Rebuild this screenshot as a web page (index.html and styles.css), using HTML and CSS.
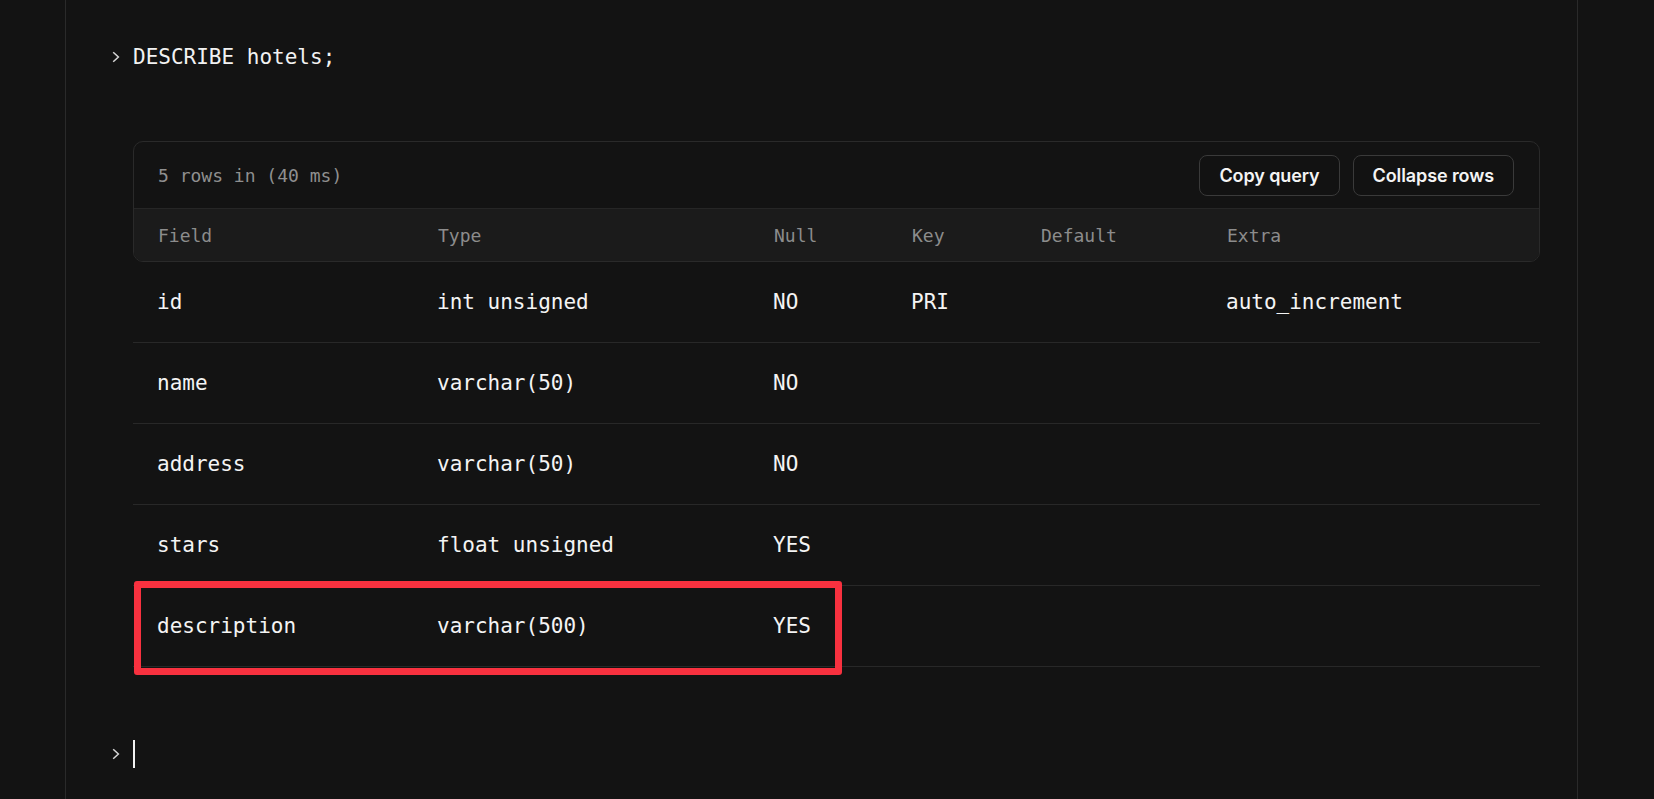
FILE: index.html
```html
<!DOCTYPE html>
<html lang="en">
<head>
<meta charset="utf-8">
<title>DESCRIBE hotels</title>
<link rel="stylesheet" href="styles.css">
</head>
<body>
<main class="console">
  <div class="prompt">
    <svg class="chev" width="8" height="12" viewBox="0 0 8 12"><path d="M1.2 1.2 L6.4 6 L1.2 10.8" fill="none" stroke="#d6d6d6" stroke-width="1.5"/></svg>
    <span class="cmd">DESCRIBE hotels;</span>
  </div>

  <section class="result">
    <div class="card">
      <div class="card-top">
        <span class="meta">5 rows in (40 ms)</span>
        <div class="actions">
          <button class="btn">Copy query</button>
          <button class="btn">Collapse rows</button>
        </div>
      </div>
      <div class="grid head">
        <span>Field</span><span>Type</span><span>Null</span><span>Key</span><span>Default</span><span>Extra</span>
      </div>
    </div>
    <div class="grid row"><span>id</span><span>int unsigned</span><span>NO</span><span>PRI</span><span></span><span>auto_increment</span></div>
    <div class="grid row"><span>name</span><span>varchar(50)</span><span>NO</span><span></span><span></span><span></span></div>
    <div class="grid row"><span>address</span><span>varchar(50)</span><span>NO</span><span></span><span></span><span></span></div>
    <div class="grid row"><span>stars</span><span>float unsigned</span><span>YES</span><span></span><span></span><span></span></div>
    <div class="grid row marked"><span>description</span><span>varchar(500)</span><span>YES</span><span></span><span></span><span></span><i class="highlight"></i></div>
  </section>

  <div class="prompt next">
    <svg class="chev" width="8" height="12" viewBox="0 0 8 12"><path d="M1.2 1.2 L6.4 6 L1.2 10.8" fill="none" stroke="#d6d6d6" stroke-width="1.5"/></svg>
    <span class="cursor"></span>
  </div>
</main>
</body>
</html>
```
FILE: styles.css
```css
html, body {
  margin: 0;
  padding: 0;
  background: #131313;
  height: 100%;
  overflow: hidden;
}

body {
  font-family: "DejaVu Sans Mono", "Liberation Mono", monospace;
  color: #f2f2f2;
}

.console {
  box-sizing: border-box;
  margin-left: 65px;
  width: 1513px;
  height: 100vh;
  border-left: 1px solid #2a2a2a;
  border-right: 1px solid #2a2a2a;
  padding: 43px 37px 0 67px;
}

.prompt {
  display: flex;
  align-items: center;
  gap: 13px;
  margin-left: -21px;
  height: 28px;
  font-size: 21px;
  line-height: 28px;
}

.chev {
  display: block;
  flex: none;
}

.cmd {
  white-space: pre;
}

.result {
  margin-top: 70px;
}

.card {
  border: 1px solid #2a2a2a;
  border-radius: 10px;
  overflow: hidden;
}

.card-top {
  display: flex;
  align-items: center;
  justify-content: space-between;
  height: 66px;
  padding: 0 25px 0 24px;
  border-bottom: 1px solid #262626;
}

.meta {
  font-size: 18px;
  color: #8f8f8f;
}

.actions {
  display: flex;
  gap: 13px;
}

.btn {
  height: 41px;
  padding: 0 19px;
  background: #121212;
  color: #f4f4f4;
  border: 1px solid #3a3a3a;
  border-radius: 8px;
  font-family: Inter, "Noto Sans", sans-serif;
  font-weight: 600;
  font-size: 18px;
  letter-spacing: -0.1px;
}

.grid {
  display: grid;
  grid-template-columns: 280px 336px 138px 129px 186px 1fr;
  align-items: center;
  padding-left: 24px;
}

.head {
  height: 52px;
  background: #1b1b1b;
  font-size: 18px;
  color: #8c8c8c;
}

.row {
  position: relative;
  height: 80px;
  padding-left: 24px;
  border-bottom: 1px solid #282828;
  font-size: 21px;
  color: #f4f4f4;
  white-space: pre;
}

.highlight {
  position: absolute;
  top: -5px;
  left: 1px;
  width: 708px;
  height: 94px;
  box-sizing: border-box;
  border: 7px solid #f8313f;
  border-radius: 3px;
}

.next {
  margin-top: 73px;
}

.cursor {
  display: block;
  width: 2px;
  height: 28px;
  background: #f2f2f2;
}
```
